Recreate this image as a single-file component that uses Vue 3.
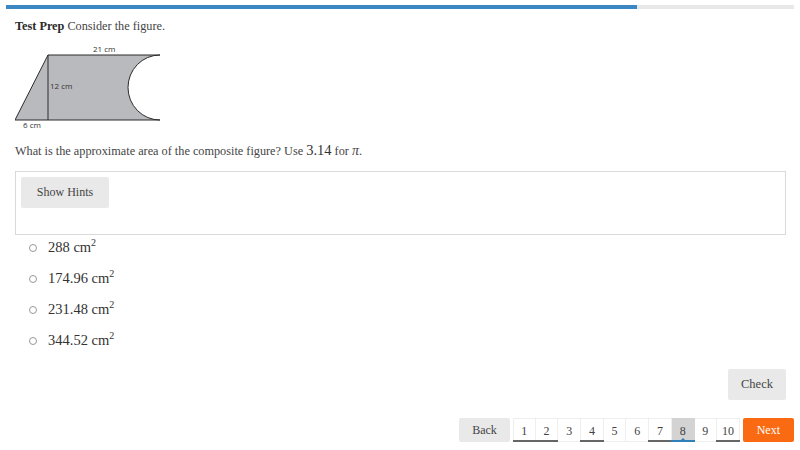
<template>
  <div class="page">
    <div class="progress">
      <div class="progress-fill" :style="{ width: progress + '%' }"></div>
    </div>

    <div class="content">
      <p class="intro"><b>Test Prep</b> Consider the figure.</p>

      <svg class="figure" width="150" height="90" viewBox="0 0 150 90">
        <path d="M33 11 H145 A32 32.5 0 0 0 145 76 H0 Z" fill="#b9babd" />
        <path d="M0 76 L33 11 H145 M33 11 V76 M0 76 H145" fill="none" stroke="#2b2b2b" stroke-width="1" />
        <path d="M145 11 A32 32.5 0 0 0 145 76" fill="none" stroke="#2b2b2b" stroke-width="1" />
        <text x="78" y="8" class="fig-label">21 cm</text>
        <text x="35" y="45" class="fig-label">12 cm</text>
        <text x="8" y="84" class="fig-label">6 cm</text>
      </svg>

      <p class="question">
        What is the approximate area of the composite figure? Use <span class="math">3.14</span> for <i class="pi">π</i>.
      </p>

      <div class="hints">
        <button class="btn hint-btn">Show Hints</button>
      </div>

      <ul class="choices">
        <li v-for="choice in choices" :key="choice" class="choice">
          <span class="radio"></span>
          <span class="math">{{ choice }} cm<sup>2</sup></span>
        </li>
      </ul>

      <div class="check-row">
        <button class="btn check-btn">Check</button>
      </div>
    </div>

    <div class="pager">
      <button class="btn back-btn">Back</button>
      <div class="pages">
        <div
          v-for="n in 10"
          :key="n"
          class="page-num"
          :class="{ done: answered.includes(n), current: n === 8 }"
        >
          {{ n }}
        </div>
      </div>
      <button class="btn next-btn">Next</button>
    </div>
  </div>
</template>

<script setup>
const progress = 80.1
const choices = ['288', '174.96', '231.48', '344.52']
const answered = [1, 2, 4, 7, 10]
</script>

<style>
body {
  background: #fff;
}
</style>

<style scoped>
.page {
  width: 800px;
  height: 450px;
  overflow: hidden;
  box-sizing: border-box;
  padding-top: 5px;
  font-family: "Liberation Serif", serif;
  font-size: 12.25px;
  color: #444;
}

.progress {
  height: 4px;
  margin: 0 6px;
  background: #e8e8e8;
}

.progress-fill {
  height: 100%;
  background: #3b87c4;
}

.content {
  padding: 0 14px 0 15px;
}

.intro {
  margin: 0;
  padding-top: 10px;
  line-height: 15px;
}

.intro b {
  color: #2a2a2a;
}

.figure {
  display: block;
  margin-top: 10px;
}

.fig-label {
  font-family: "Open Sans", sans-serif;
  font-size: 8px;
  fill: #333;
}

.question {
  margin: 8px 0 0;
  line-height: 16px;
}

.math {
  font-size: 14.5px;
  color: #333;
}

.pi {
  font-size: 14px;
}

.hints {
  height: 64px;
  margin-top: 12px;
  padding: 5px;
  box-sizing: border-box;
  border: 1px solid #d9d9d9;
}

.btn {
  border: 0;
  border-radius: 2px;
  background: #e9e9e9;
  color: #444;
  font-family: inherit;
  font-size: 12px;
  padding: 0;
}

.hint-btn {
  width: 88px;
  height: 31px;
}

.choices {
  list-style: none;
  margin: -3px 0 0;
  padding: 0;
}

.choice {
  display: flex;
  align-items: center;
  height: 31px;
  gap: 11px;
  padding-left: 14px;
}

.choice sup {
  font-size: 10px;
  line-height: 0;
}

.radio {
  width: 6px;
  height: 6px;
  border: 1px solid #999;
  border-radius: 50%;
}

.check-row {
  display: flex;
  justify-content: flex-end;
  margin-top: 13px;
}

.check-btn {
  width: 58px;
  height: 31px;
  font-size: 12.5px;
}

.pager {
  display: flex;
  align-items: flex-start;
  margin-top: 18px;
  padding-left: 459px;
}

.back-btn {
  width: 51px;
  height: 24px;
  margin-right: 3px;
}

.pages {
  display: flex;
  height: 24px;
}

.page-num {
  width: 22.7px;
  height: 24px;
  box-sizing: border-box;
  border: 1px solid #eee;
  border-left-width: 0;
  text-align: center;
  line-height: 24px;
  font-size: 12px;
  position: relative;
}

.page-num:first-child {
  border-left-width: 1px;
}

.page-num.done::before,
.page-num.current::before {
  content: "";
  position: absolute;
  left: -1px;
  right: -1px;
  bottom: -1px;
  height: 2px;
  background: #666;
}

.page-num.current {
  background: #d3d3d3;
  border-color: #d3d3d3;
}

.page-num.current::before {
  background: #2f7fb8;
}

.page-num.current::after {
  content: "";
  position: absolute;
  left: 50%;
  bottom: 1px;
  margin-left: -2px;
  border: 2px solid transparent;
  border-top: 0;
  border-bottom-color: #2f7fb8;
}

.next-btn {
  width: 51px;
  height: 24px;
  margin-left: 3px;
  background: #f96a12;
  color: #fff;
}
</style>
